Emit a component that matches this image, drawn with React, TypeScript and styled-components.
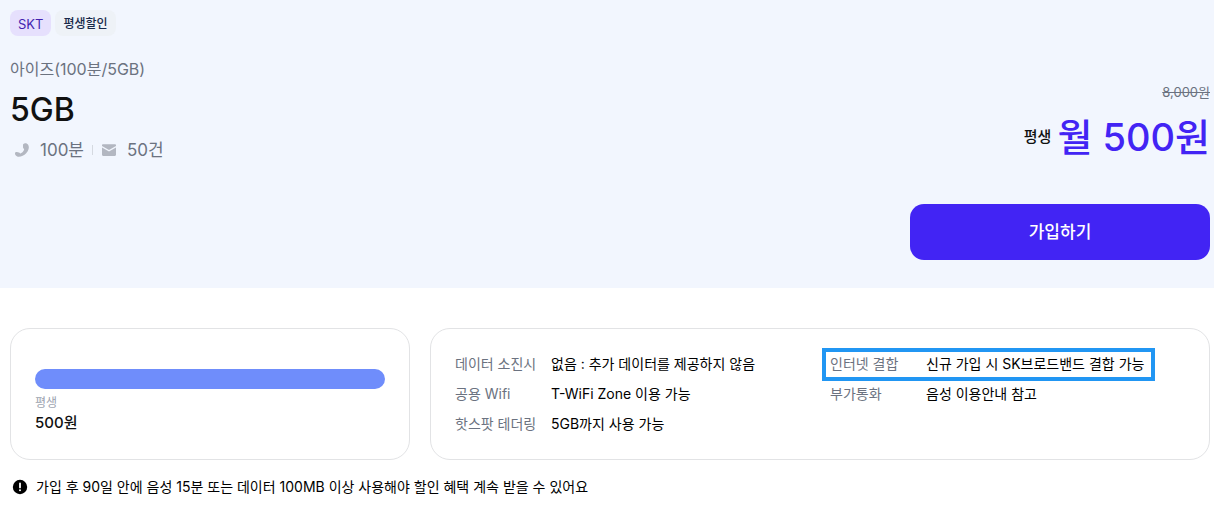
import React from "react";
import styled, { createGlobalStyle } from "styled-components";

const GlobalStyle = createGlobalStyle`
  *, *::before, *::after { box-sizing: border-box; }
  body {
    margin: 0;
    background: #fff;
    color: #111;
    font-family: Inter, "Noto Sans CJK KR", sans-serif;
    font-size: 14px;
    font-weight: 500;
  }
  h1, p, dl, dd { margin: 0; }
`;

const Hero = styled.header`
  display: flex;
  justify-content: space-between;
  background: #f2f6fe;
  padding: 10px 4px 28px 10px;
`;

const Summary = styled.div`
  display: flex;
  flex-direction: column;
`;

const Badges = styled.div`
  display: flex;
  gap: 4px;
  margin-bottom: 20px;
`;

const Badge = styled.span<{ $tone: "violet" | "gray" }>`
  height: 26px;
  padding: 0 8px;
  border-radius: 8px;
  font-size: ${(p) => (p.$tone === "violet" ? "13px" : "12px")};
  font-weight: ${(p) => (p.$tone === "violet" ? 400 : 500)};
  line-height: 28px;
  color: ${(p) => (p.$tone === "violet" ? "#431fb0" : "#16294a")};
  background: ${(p) => (p.$tone === "violet" ? "#e6e0fd" : "#eef2f7")};
`;

const PlanName = styled.p`
  font-size: 16px;
  font-weight: 400;
  line-height: 26px;
  color: #6b7280;
`;

const DataAmount = styled.h1`
  margin: 6px 0;
  font-size: 32px;
  font-weight: 500;
  line-height: 44px;
`;

const Allowances = styled.div`
  display: flex;
  align-items: center;
  padding-left: 4px;
  line-height: 24px;
`;

const Allowance = styled.span`
  display: flex;
  align-items: center;
  gap: 10px;
  font-size: 17px;
  font-weight: 400;
  color: #6b7280;

  & + & {
    margin-left: 8px;
  }
  & + &::before {
    content: "";
    width: 1px;
    height: 10px;
    margin-right: -2px;
    background: #d5d9e0;
  }
`;

const Purchase = styled.div`
  display: flex;
  flex-direction: column;
  align-items: flex-end;
  width: 300px;
  padding-top: 72px;
`;

const OldPrice = styled.del`
  font-size: 13px;
  font-weight: 400;
  line-height: 20px;
  color: #6b7280;
`;

const Price = styled.p`
  display: flex;
  align-items: center;
  gap: 6px;
  margin: 10px 0 42px;
  font-size: 15px;
  line-height: 50px;
  white-space: nowrap;
`;

const PriceValue = styled.strong`
  font-size: 38px;
  font-weight: 500;
  color: #4224f4;
`;

const JoinButton = styled.button`
  width: 100%;
  height: 56px;
  padding: 0 0 4px;
  border: 0;
  border-radius: 14px;
  background: #4224f4;
  color: #fff;
  font: inherit;
  font-size: 17px;
  cursor: pointer;
`;

const Details = styled.section`
  display: flex;
  gap: 20px;
  padding: 40px 4px 0 10px;
`;

const Card = styled.div<{ $width?: string }>`
  flex: ${(p) => (p.$width ? `0 0 ${p.$width}` : "1")};
  padding: 20px 24px;
  border: 1px solid #e2e3e5;
  border-radius: 20px;
`;

const PeriodBar = styled.div`
  height: 20px;
  margin: 20px 0 4px;
  border-radius: 10px;
  background: #6f8dfb;
`;

const PeriodLabel = styled.p`
  font-size: 12px;
  font-weight: 400;
  line-height: 20px;
  color: #9ca3af;
`;

const PeriodPrice = styled.p`
  font-size: 15px;
  line-height: 20px;
`;

const Columns = styled.div`
  display: grid;
  grid-template-columns: 1fr 1fr;
  gap: 20px;
`;

const Specs = styled.dl`
  display: flex;
  flex-direction: column;
  align-items: flex-start;
`;

const Spec = styled.div<{ $marked?: boolean }>`
  position: relative;
  display: grid;
  grid-template-columns: 96px auto;
  line-height: 30px;
  white-space: nowrap;

  &::after {
    content: ${(p) => (p.$marked ? '""' : "none")};
    position: absolute;
    inset: -1px -11px -2px -8px;
    border: 4px solid #2196f3;
  }
`;

const SpecName = styled.dt`
  font-weight: 400;
  color: #6b7280;
`;

const SpecValue = styled.dd`
  font-weight: 400;
  color: #000;
`;

const Notice = styled.p`
  display: flex;
  align-items: center;
  gap: 8px;
  padding: 16px 12px;
  font-weight: 400;
  line-height: 22px;
  color: #000;
`;

type SpecItem = { name: string; value: string; marked?: boolean };

const specColumns: SpecItem[][] = [
  [
    { name: "데이터 소진시", value: "없음 : 추가 데이터를 제공하지 않음" },
    { name: "공용 Wifi", value: "T-WiFi Zone 이용 가능" },
    { name: "핫스팟 테더링", value: "5GB까지 사용 가능" },
  ],
  [
    { name: "인터넷 결합", value: "신규 가입 시 SK브로드밴드 결합 가능", marked: true },
    { name: "부가통화", value: "음성 이용안내 참고" },
  ],
];

const PhoneIcon = () => (
  <svg width="16" height="16" viewBox="0 0 16 16" aria-hidden="true">
    <path
      d="M10.4 1.5c1.300-.6 3 .1 3.900 1.400 1.300 2.300.3 5.800-2.100 8.400-2.500 2.600-6.300 4-9 3.200C1.600 14 .8 12.500 1 11.100c.2-.9 1-1.300 1.900-1.100l2 .5c.6.1.9.4 1.200.9.3.2.7 0 1.200-.4 1.200-.8 2.200-2 2.700-3.100.2-.5.2-.8-.1-1.100-.6-.3-.9-.8-.9-1.500V3c0-.8.6-1.300 1.400-1.500Z"
      fill="#b3b7c1"
    />
  </svg>
);

const MailIcon = () => (
  <svg width="16" height="16" viewBox="0 0 16 16" aria-hidden="true">
    <path
      d="M2.200 2.200h11.600c.7 0 1.200.4 1.200 1v.9L8 8.100 1 4.100v-.9c0-.6.5-1 1.200-1ZM1 5.500l7 4.100 7-4.100v7.300c0 .7-.5 1.200-1.200 1.200H2.200C1.500 14 1 13.500 1 12.800Z"
      fill="#b3b7c1"
    />
  </svg>
);

const AlertIcon = () => (
  <svg width="16" height="16" viewBox="0 0 16 16" aria-hidden="true">
    <circle cx="8" cy="8" r="7.200" fill="#000" />
    <path d="M8 4.400v4" stroke="#fff" strokeWidth="1.800" strokeLinecap="round" />
    <circle cx="8" cy="11.300" r="1" fill="#fff" />
  </svg>
);

export default function App() {
  return (
    <main>
      <GlobalStyle />
      <Hero>
        <Summary>
          <Badges>
            <Badge $tone="violet">SKT</Badge>
            <Badge $tone="gray">평생할인</Badge>
          </Badges>
          <PlanName>아이즈(100분/5GB)</PlanName>
          <DataAmount>5GB</DataAmount>
          <Allowances>
            <Allowance>
              <PhoneIcon />
              100분
            </Allowance>
            <Allowance>
              <MailIcon />
              50건
            </Allowance>
          </Allowances>
        </Summary>
        <Purchase>
          <OldPrice>8,000원</OldPrice>
          <Price>
            평생 <PriceValue>월 500원</PriceValue>
          </Price>
          <JoinButton type="button">가입하기</JoinButton>
        </Purchase>
      </Hero>
      <Details>
        <Card $width="400px">
          <PeriodBar />
          <PeriodLabel>평생</PeriodLabel>
          <PeriodPrice>500원</PeriodPrice>
        </Card>
        <Card>
          <Columns>
            {specColumns.map((items) => (
              <Specs key={items[0].name}>
                {items.map((item) => (
                  <Spec key={item.name} $marked={item.marked}>
                    <SpecName>{item.name}</SpecName>
                    <SpecValue>{item.value}</SpecValue>
                  </Spec>
                ))}
              </Specs>
            ))}
          </Columns>
        </Card>
      </Details>
      <Notice>
        <AlertIcon />
        가입 후 90일 안에 음성 15분 또는 데이터 100MB 이상 사용해야 할인 혜택 계속 받을 수 있어요
      </Notice>
    </main>
  );
}
